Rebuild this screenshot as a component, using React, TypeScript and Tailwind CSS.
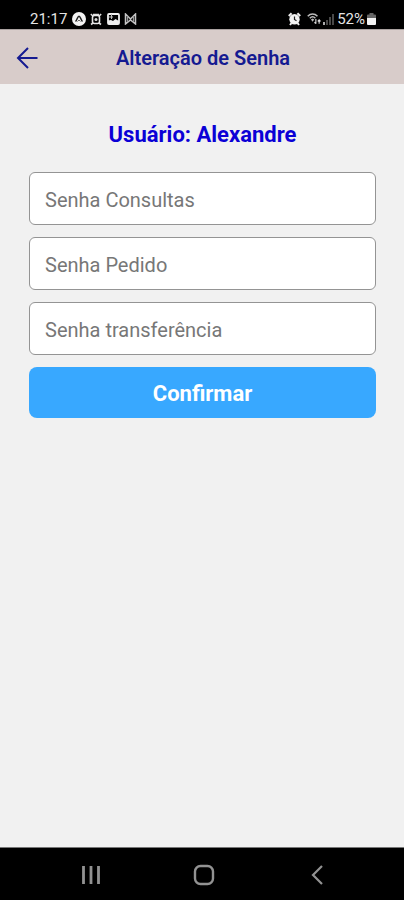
import { useState } from "react";
import type { FormEvent } from "react";

function AlarmIcon() {
  return (
    <svg width="13" height="14" viewBox="0 0 13 14" fill="none" aria-hidden="true">
      <path d="M.8 4 3.600 1.200M12.200 4 9.400 1.200M2 13l1.500-2M11 13l-1.500-2" stroke="#eee" strokeWidth="2" />
      <circle cx="6.500" cy="7.200" r="5.200" fill="#f2f2f2" />
      <path d="M6.500 4.500v3l2 1.200" stroke="#222" strokeWidth="1.200" />
    </svg>
  );
}

function StatusBar() {
  return (
    <div className="flex h-[29px] shrink-0 items-center justify-between bg-black pt-2 pr-7 pl-[30px] text-[15px] leading-5 text-[#e4e4e4]">
      <div className="flex items-center gap-1">
        <span>21:17</span>
        <svg className="ml-px" width="14" height="14" viewBox="0 0 14 14" fill="none" aria-hidden="true">
          <circle cx="7" cy="7" r="7" fill="#f4f4f4" />
          <path d="M3.500 9.500C5.200 8.200 5.500 4.200 7 4.200s1.800 4 3.500 5.300" stroke="#222" strokeWidth="1.500" />
          <path d="M5.500 9.500 7 8l1.500 1.500" stroke="#666" strokeWidth="1" />
        </svg>
        <svg width="12" height="14" viewBox="0 0 12 14" fill="none" aria-hidden="true">
          <path d="M.8 2.200 3 4M11.200 2.200 9 4M1 12.500 3 11M11 12.500 9 11M3 2.500h6" stroke="#ddd" strokeWidth="1.600" />
          <rect x="2.500" y="3.500" width="7" height="8" rx="2" stroke="#e8e8e8" strokeWidth="1.600" />
          <circle cx="6" cy="7.500" r="1.500" fill="#ddd" />
        </svg>
        <svg className="ml-px" width="13" height="12" viewBox="0 0 13 12" fill="none" aria-hidden="true">
          <rect x="1" y="1" width="11" height="10" rx="1" stroke="#eee" strokeWidth="1.800" />
          <path d="M1 11V7.500l3-.5 2 1 2.500-2 3.500 2v3z" fill="#eee" />
          <path d="M4.500 1v5M2 4h4" stroke="#bbb" strokeWidth="1" />
        </svg>
        <svg width="13" height="12" viewBox="0 0 13 12" fill="none" aria-hidden="true">
          <path d="M1.500 11V1l5 5 5-5v10l-5-4z" stroke="#c4c4c4" strokeWidth="1.500" />
          <path d="M3.500 3v6M9.500 3v6" stroke="#999" strokeWidth="1.400" />
        </svg>
      </div>
      <div className="flex items-center">
        <AlarmIcon />
        <svg className="ml-1.5" width="14" height="13" viewBox="0 0 15 13" fill="none" aria-hidden="true">
          <path d="M.8 4c3-3.200 7.400-3.200 10.400 0M3 6.200c1.800-1.800 4.200-1.800 6 0" stroke="#bbb" strokeWidth="1.600" />
          <path d="m4.200 7.500 1.800-1 1.800 1L6 10z" fill="#bbb" />
          <path d="M9.500 7v5M8 10.500 9.500 12M13 12V8M11.500 9.500 13 8l1.500 1.500" stroke="#ddd" strokeWidth="1.200" />
        </svg>
        <svg className="mx-0.5" width="11" height="12" viewBox="0 0 11 12" aria-hidden="true">
          <path d="M0 9h2v3H0z" fill="#aaa" />
          <path d="M3 7h2v5H3zM6 4h2v8H6zM9 1h2v11H9z" fill="#484848" />
        </svg>
        <span className="ml-px">52%</span>
        <svg className="ml-0.5" width="9" height="12" viewBox="0 0 9 12" aria-hidden="true">
          <path d="M2.500 0h4v1.500H8A1 1 0 0 1 9 2.500V5H0V2.500a1 1 0 0 1 1-1h1.500z" fill="#666" />
          <path d="M0 5h9v6a1 1 0 0 1-1 1H1a1 1 0 0 1-1-1z" fill="#f2f2f2" />
        </svg>
      </div>
    </div>
  );
}

function Header() {
  return (
    <header className="grid h-[55px] shrink-0 grid-cols-[54px_1fr_52px] items-center border-t border-[#aaa2a0] bg-[#d8ccca] pt-px text-[#151a91]">
      <button type="button" aria-label="Voltar" className="flex h-full items-center pl-4">
        <svg width="22" height="22" viewBox="0 0 22 22" fill="none" stroke="currentColor" strokeWidth="2" aria-hidden="true">
          <path d="M21.500 11H2M12 1 2 11l10 10" />
        </svg>
      </button>
      <h1 className="text-center text-xl leading-6 font-semibold">Alteração de Senha</h1>
    </header>
  );
}

function PasswordField({ name, label }: { name: string; label: string }) {
  const [value, setValue] = useState("");
  return (
    <input
      name={name}
      type="password"
      aria-label={label}
      value={value}
      onChange={(event) => setValue(event.target.value)}
      placeholder={label}
      className="block h-[53px] w-full rounded-md border border-[#949494] bg-white px-[15px] pt-0.5 text-xl text-[#222] placeholder:text-[#777]"
    />
  );
}

function NavigationBar() {
  return (
    <nav aria-label="Sistema" className="flex h-[53px] shrink-0 items-center justify-around border-t border-[#777] bg-black pt-px pr-[31px] pl-[34px] text-[#929292]">
      <button type="button" aria-label="Recentes" className="flex w-11 justify-center">
        <svg width="20" height="20" viewBox="0 0 20 20" fill="none" stroke="currentColor" strokeWidth="2.800" aria-hidden="true">
          <path d="M2.500 1v18M10 1v18M17.500 1v18" />
        </svg>
      </button>
      <button type="button" aria-label="Início" className="flex w-11 justify-center">
        <svg width="22" height="22" viewBox="0 0 22 22" fill="none" stroke="currentColor" strokeWidth="2.400" aria-hidden="true">
          <rect x="2" y="2" width="18" height="18" rx="5.500" />
        </svg>
      </button>
      <button type="button" aria-label="Voltar do sistema" className="flex w-11 justify-center">
        <svg width="12" height="20" viewBox="0 0 12 20" fill="none" stroke="currentColor" strokeWidth="2.200" aria-hidden="true">
          <path d="M11 1 2 10l9 9" />
        </svg>
      </button>
    </nav>
  );
}

export default function App() {
  const submit = (event: FormEvent) => event.preventDefault();
  return (
    <div className="flex min-h-screen flex-col bg-[#f1f1f1] font-[Roboto,sans-serif]">
      <StatusBar />
      <Header />
      <main className="flex-1 px-7 pt-9 pl-[29px]">
        <h2 className="pt-px text-center text-[22px] leading-7 font-bold text-[#0b00d6]">Usuário: Alexandre</h2>
        <form onSubmit={submit} className="mt-[23px] flex flex-col gap-3">
          <PasswordField name="consultas" label="Senha Consultas" />
          <PasswordField name="pedido" label="Senha Pedido" />
          <PasswordField name="transferencia" label="Senha transferência" />
          <button type="submit" className="h-[51px] rounded-lg bg-[#38a8ff] pt-px text-[22px] font-bold text-white">
            Confirmar
          </button>
        </form>
      </main>
      <NavigationBar />
    </div>
  );
}
